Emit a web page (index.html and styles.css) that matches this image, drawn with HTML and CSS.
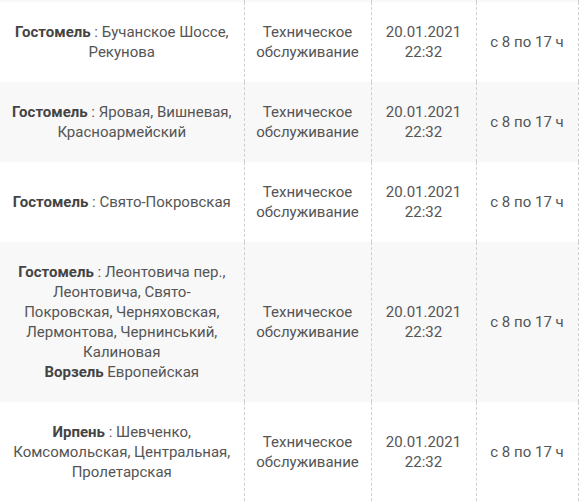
FILE: index.html
```html
<!DOCTYPE html>
<html lang="ru">
<head>
<meta charset="utf-8">
<title>Отключения</title>
<link rel="stylesheet" href="styles.css">
</head>
<body>
<table class="sched">
  <colgroup>
    <col class="c-addr"><col class="c-type"><col class="c-date"><col class="c-time">
  </colgroup>
  <tbody>
    <tr class="stub"><td></td><td></td><td></td><td></td></tr>
    <tr>
      <td><b>Гостомель</b> : Бучанское Шоссе, Рекунова</td>
      <td>Техническое обслуживание</td>
      <td>20.01.2021 22:32</td>
      <td>с 8 по 17 ч</td>
    </tr>
    <tr>
      <td><b>Гостомель</b> : Яровая, Вишневая, Красноармейский</td>
      <td>Техническое обслуживание</td>
      <td>20.01.2021 22:32</td>
      <td>с 8 по 17 ч</td>
    </tr>
    <tr>
      <td><b>Гостомель</b> : Свято-Покровская</td>
      <td>Техническое обслуживание</td>
      <td>20.01.2021 22:32</td>
      <td>с 8 по 17 ч</td>
    </tr>
    <tr>
      <td><b>Гостомель</b> : Леонтовича пер., Леонтовича, Свято-Покровская, Черняховская, Лермонтова, Чернинський, Калиновая<br><b>Ворзель</b> Европейская</td>
      <td>Техническое обслуживание</td>
      <td>20.01.2021 22:32</td>
      <td>с 8 по 17 ч</td>
    </tr>
    <tr class="last">
      <td><b>Ирпень</b> : Шевченко, Комсомольская, Центральная, Пролетарская</td>
      <td>Техническое обслуживание</td>
      <td>20.01.2021 22:32</td>
      <td>с 8 по 17 ч</td>
    </tr>
  </tbody>
</table>
</body>
</html>
```

FILE: styles.css
```css
html, body {
  margin: 0;
  padding: 0;
  background: #ffffff;
}
body {
  font-family: Roboto, "Liberation Sans", Arial, sans-serif;
  font-size: 15px;
  line-height: 20px;
  color: #555555;
}
.sched {
  border-collapse: collapse;
  table-layout: fixed;
  width: 578px;
}
.c-addr { width: 244px; }
.c-type { width: 127px; }
.c-date { width: 105px; }
.c-time { width: 102px; }
.sched td {
  padding: 20px 10px;
  text-align: center;
  vertical-align: middle;
  border-right: 1px dashed #cfcfcf;
  height: 40px;
}
.sched td:first-child {
  padding-left: 11px;
  padding-right: 11px;
}
.sched tr:nth-child(odd) td {
  background: #f8f8f8;
}
.sched tr.stub td {
  height: 2px;
  padding: 0;
}
.sched tr.last td {
  padding-bottom: 19px;
  border-bottom: 1px solid #eeeeee;
}
.sched b {
  font-weight: 700;
  color: #444444;
}
```
